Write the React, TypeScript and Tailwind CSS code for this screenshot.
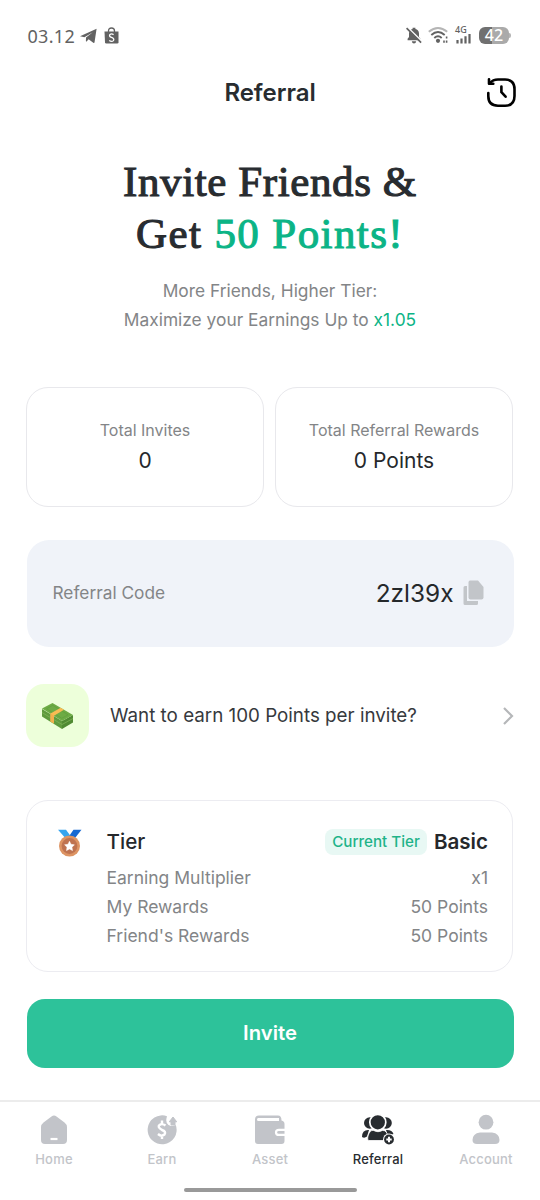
import React from "react";

interface NavItemProps {
  label: string;
  active?: boolean;
  children: React.ReactNode;
}

const StatusBar: React.FC = () => (
  <div className="flex h-[70px] items-center justify-between pl-[27.5px] pr-[29px] text-[#626262]">
    <div className="flex items-center pt-px">
      <span className="w-[52px] font-['Noto_Sans'] text-[18px] leading-[20px] tracking-[0.3px]">03.12</span>
      <svg className="h-[16px] w-[17px]" viewBox="0 0 17 16" fill="currentColor">
        <path d="M0 8.2 16.6 0.8 14.5 14.6Q14.2 15.4 13.3 14.8L8.6 11.3 6.6 13.4Q6 13.8 5.9 13L6 9.5 12.8 4.2 4.4 9.2Z" />
      </svg>
      {/* Shopee */}
      <svg className="ml-[7px] h-[17px] w-[15px]" viewBox="0 0 14 17">
        <path d="M4 5V4Q4 1 7 1T10 4V5" fill="none" stroke="currentColor" strokeWidth="1.3" />
        <path d="M0 4.6H14V15.2Q14 16.5 12.7 16.5H1.8Q.6 16.5.5 15.2Z" fill="currentColor" />
        <path d="M9.1 7.6Q7 6.2 5.5 7.4Q4.1 9.4 7 10.4Q10.3 11.6 8.9 13.6Q7.3 15.2 4.7 13.5" fill="none" stroke="white" strokeWidth="1.3" />
      </svg>
    </div>
    <div className="flex items-center">
      <svg className="h-[17px] w-[16px]" viewBox="0 0 16 17">
        <path d="M1.6 13.2V11.8L3 10V6.5Q3.2 2.8 6.6 2V.8H9.4V2Q12.8 2.8 13 6.5V10L14.4 11.8V13.2ZM5.8 14.2H10.2Q9.9 16.4 8 16.4T5.8 14.2Z" fill="currentColor" />
        <path d="M1.8.6 16 14.4" stroke="white" strokeWidth="1.5" />
        <path d="M.6 1.2 15.1 15.6" stroke="currentColor" strokeWidth="1.7" />
      </svg>
      <svg className="ml-[6px] h-[18px] w-[21px]" viewBox="0 0 21 18" fill="none" strokeWidth="1.9">
        <path d="M.8 5.8Q10 -2 19.2 5.8" stroke="#b5b5b5" />
        <path d="M3.3 9Q10 3.2 16.7 9" stroke="currentColor" />
        <path d="M6.3 12Q10 8.6 13.7 12" stroke="currentColor" />
        <circle cx="10" cy="14.8" r="2.1" fill="currentColor" />
        <path d="M16 14.6V16.8M18.6 10.4V12.6M18.6 14.6V16.8" stroke="currentColor" strokeWidth="1.6" />
      </svg>
      <div className="ml-[6px] flex w-[17px] flex-col">
        <span className="h-[8px] font-['Noto_Sans'] text-[9px] font-medium leading-[7px]">4G</span>
        <svg className="h-[10px] w-[17px]" viewBox="0 0 17 10">
          <path d="M2.5 6V9.5M6.5 4.5V9.5M10.5 2.3V9.5M14.5 0V9.5" stroke="currentColor" strokeWidth="2.2" />
        </svg>
      </div>
      <div className="ml-[7px] flex h-[17px] w-[30px] items-center justify-center rounded-[6px] bg-linear-to-r from-[#707070] from-42% to-[#aaa] to-42% font-['Noto_Sans'] text-[16px] font-medium leading-[17px] text-white">
        42
      </div>
      <div className="h-[5px] w-[2px] rounded-r-sm bg-[#b5b5b5]" />
    </div>
  </div>
);

const StatCard: React.FC<{ label: string; value: string }> = ({ label, value }) => (
  <div className="flex flex-1 flex-col items-center rounded-[22px] border border-[#e8e8ec] pt-[29px]">
    <span className="text-[16px] leading-[26px] text-[#838587]">{label}</span>
    <span className="text-[21px] leading-[35px] text-[#25282b]">{value}</span>
  </div>
);

const TierRow: React.FC<{ label: string; value: string }> = ({ label, value }) => (
  <div className="flex justify-between text-[17.5px] leading-[29px] text-[#838587]">
    <span>{label}</span>
    <span>{value}</span>
  </div>
);

const NavItem: React.FC<NavItemProps> = ({ label, active, children }) => (
  <div className={`flex flex-1 flex-col items-center ${active ? "text-[#282c30]" : "text-[#c2c4c9]"}`}>
    <svg className="h-[34px] w-[34px]" viewBox="0 0 34 34" fill="currentColor">
      {children}
    </svg>
    <span className="mt-[3px] text-[13px] font-medium leading-[18px] tracking-[0.2px]">{label}</span>
  </div>
);

const App: React.FC = () => {
  return (
    <div className="flex h-[1200px] w-[540px] flex-col overflow-hidden bg-white font-['Inter',sans-serif]">
      <StatusBar />

      {/* Header */}
      <header className="grid h-[44px] grid-cols-[1fr_auto_1fr] items-center px-[23.5px]">
        <h1 className="col-start-2 pt-px text-[24px] font-semibold leading-[30px] tracking-[-0.05px] text-[#282c30]">Referral</h1>
        <svg className="h-[32px] w-[32px] justify-self-end" viewBox="0 0 32 32" fill="none" stroke="black" strokeWidth="2.6" strokeLinecap="round" strokeLinejoin="round">
          <path d="M3.3 17V20Q3.3 29.7 13 29.7H20Q29.5 29.7 29.5 20V13Q29.5 3.5 20 3.5H13Q8 3.5 4.5 7.4" />
          <path d="M4 3.3V7.8H8.3" />
          <path d="M16.4 10.5V16.2L20.6 20.7" />
        </svg>
      </header>

      {/* Hero */}
      <section className="mt-[42px] text-center">
        <h2 className="font-['Liberation_Serif',serif] text-[43px] font-normal leading-[52px] text-[#282c30] [-webkit-text-stroke:1.1px_currentColor]">
          <span className="tracking-[0.6px]">Invite Friends &amp;</span>
          <br />
          <span className="tracking-[1.4px]">
            Get <span className="text-[#0bb486]">50 Points!</span>
          </span>
        </h2>
        <p className="mt-[16px] text-[17.35px] leading-[29px] text-[#838587]">
          More Friends, Higher Tier:
          <br />
          Maximize your Earnings Up to <span className="text-[#0bb486]">x1.05</span>
        </p>
      </section>

      <section className="mx-[26px] mt-[53px] flex h-[120px] gap-[11px] pr-px">
        <StatCard label="Total Invites" value="0" />
        <StatCard label="Total Referral Rewards" value="0 Points" />
      </section>

      {/* Referral code */}
      <section className="mx-[26.5px] mt-[32.5px] flex h-[107px] items-center justify-between rounded-[22px] bg-[#f0f3f9] pl-[26px] pr-[30px]">
        <span className="text-[17.3px] text-[#838587]">Referral Code</span>
        <div className="flex items-center gap-[9px]">
          <span className="pt-px text-[24.4px] text-[#25282b]">2zl39x</span>
          <svg className="h-[26px] w-[21px]" viewBox="0 0 21 26" fill="#c2c5c9">
            <path d="M7 .5H15L20.5 7V17.5Q20.5 19.5 18.5 19.5H7.5Q5.5 19.5 5.5 17.5V2.5Q5.5.5 7 .5Z" />
            <path d="M2 6H4V21H15V23.5Q15 25 13.5 25H2Q.5 25 .5 23.5V7.5Q.5 6 2 6Z" />
          </svg>
        </div>
      </section>

      <section className="mx-[26px] mt-[37.5px] flex h-[63px] items-center">
        <div className="flex h-[63px] w-[63px] items-center justify-center rounded-[18px] bg-[#edffda]">
          <svg className="h-[26px] w-[31px]" viewBox="0 0 31 26">
            <path d="M0 6 20 18V26L0 13.5Z" fill="#5f9a3d" />
            <path d="M20 18 31 12V19.5L20 26Z" fill="#508a32" />
            <path d="M0 5.5 10.5 0 31 12 20 18Z" fill="#6dab45" />
            <path d="M0 9.5 20 21.5 31 15.5" fill="none" stroke="#82b65a" strokeWidth=".7" />
            <path d="M4.5 5.7 10.8 2.3 26 11.8 19.8 15.3Z" fill="none" stroke="#5f9f3c" strokeWidth=".8" />
            <path d="M8.5 10.6 18.7 4.8 22 6.8 12 12.7V20.5L8.5 18.5Z" fill="#f8bc53" />
            <path d="M8.5 10.6 12 12.7V20.5L8.5 18.5Z" fill="#f2b04d" />
          </svg>
        </div>
        <span className="ml-[21px] flex-1 pt-px text-[18.8px] text-[#36393d]">Want to earn 100 Points per invite?</span>
        <svg className="h-[20px] w-[12px]" viewBox="0 0 12 20" fill="none" stroke="#b5b7b9" strokeWidth="2.2">
          <path d="M2 2 10 10 2 18" />
        </svg>
      </section>

      {/* Tier */}
      <section className="ml-[26px] mr-[27px] mt-[53px] flex h-[172px] rounded-[22px] border border-[#ececf1] pl-[30px] pr-[24px] pt-[25px]">
        <svg className="mt-[3px] h-[28px] w-[25px]" viewBox="0 0 25 28">
          <path d="M1 .7H9L15 9 10 11Z" fill="#36a5ef" />
          <path d="M16.5.7H24.5L16.5 11 11.5 8Z" fill="#1769d2" />
          <circle cx="12.5" cy="17" r="10.5" fill="#dd9463" />
          <circle cx="12.5" cy="17" r="7.9" fill="#bf7350" />
          <path d="M12.5 12.2 14 15.3 17.4 15.8 15 18.2 15.5 21.6 12.5 20 9.5 21.6 10 18.2 7.6 15.8 11 15.3Z" fill="white" stroke="white" strokeWidth=".5" strokeLinejoin="round" />
        </svg>
        <div className="ml-[24.5px] flex-1">
          <div className="mb-[5px] flex h-[32px] items-center text-[20.6px] text-[#25282b]">
            <span className="font-medium">Tier</span>
            <span className="ml-auto mr-[7px] h-[26px] rounded-[8px] bg-[#e8f8f4] px-[7px] text-[15.2px] font-medium leading-[26px] text-[#1fb389]">
              Current Tier
            </span>
            <span className="font-semibold">Basic</span>
          </div>
          <TierRow label="Earning Multiplier" value="x1" />
          <TierRow label="My Rewards" value="50 Points" />
          <TierRow label="Friend's Rewards" value="50 Points" />
        </div>
      </section>

      <button
        type="button"
        className="mx-[26.5px] mt-[27px] h-[69px] shrink-0 rounded-[18px] bg-[#2dc29a] text-[20.3px] font-semibold text-white"
      >
        Invite
      </button>

      {/* Bottom navigation */}
      <nav className="mt-[32px] flex h-[87px] shrink-0 border-t-2 border-[#ececec] pt-[11px]">
        <NavItem label="Home">
          <path d="M14.5 3.5Q17 1.5 19.5 3.5L27.5 9.5Q30 11.5 30 14V27Q30 31 26 31H8Q4 31 4 27V14Q4 11.5 6.5 9.5Z" />
          <path d="M13.5 26H20.5" stroke="white" strokeWidth="2.2" />
        </NavItem>
        <NavItem label="Earn">
          <path d="M22 3.2A14.5 14.5 0 1 0 30.8 12Q27 14 23.5 12T22 3.2Z" />
          <path d="M26 12V8.8H24.3L28 4 31.7 8.8H30V12Z" strokeWidth="1" stroke="currentColor" strokeLinejoin="round" />
          <path d="M20.5 12.5Q17 10 14.5 12T17 17Q21.5 18.5 19.5 21.5 16.5 24 13 21M17 7.5V11.5M17 22.5V26" fill="none" stroke="white" strokeWidth="2.4" />
        </NavItem>
        <NavItem label="Asset">
          <path d="M6 2.5H25Q28.5 2.5 28.5 7.5Q31.5 8 31.5 11V28Q31.5 31 28.5 31H5Q2 31 2 28V6.5Q2 2.5 6 2.5Z" />
          <path d="M5.2 4.9H26V8H5.5Q4 8 4 6.5Q4 4.9 5.2 4.9Z" fill="white" />
          <path d="M32 16.9H26Q23 16.9 23 19.4T26 21.9H32" fill="none" stroke="white" strokeWidth="2.2" />
        </NavItem>
        <NavItem label="Referral" active>
          <circle cx="8.8" cy="10" r="5.8" />
          <circle cx="25" cy="10" r="5.8" />
          <path d="M1 24Q1 16.5 8 17L6 23.5Q3.5 25.5 1 24ZM25 17Q31 16.5 32.5 21L27 23Z" />
          <circle cx="16.8" cy="9.3" r="8" stroke="white" strokeWidth="1.7" />
          <path d="M8 27.5Q6 27.5 7 23Q9 16.5 12.5 17.5Q17 20 21.5 17.5Q26 17 27 24L22 27.5Z" stroke="white" strokeWidth=".8" />
          <circle cx="28" cy="26.5" r="6" fill="white" />
          <circle cx="28" cy="26.5" r="4.9" />
          <path d="M28 23.8V29.2M25.3 26.5H30.7" stroke="white" strokeWidth="2" />
        </NavItem>
        <NavItem label="Account">
          <circle cx="17" cy="9.2" r="7.4" />
          <path d="M11 19.5H23Q30.5 20.5 30.5 27Q30.5 31 26 31H8Q3.5 31 3.5 27Q3.5 20.5 11 19.5Z" />
        </NavItem>
      </nav>
      <div className="mx-auto mt-px h-[4px] w-[173px] rounded-full bg-[#999]" />
    </div>
  );
};

export default App;
